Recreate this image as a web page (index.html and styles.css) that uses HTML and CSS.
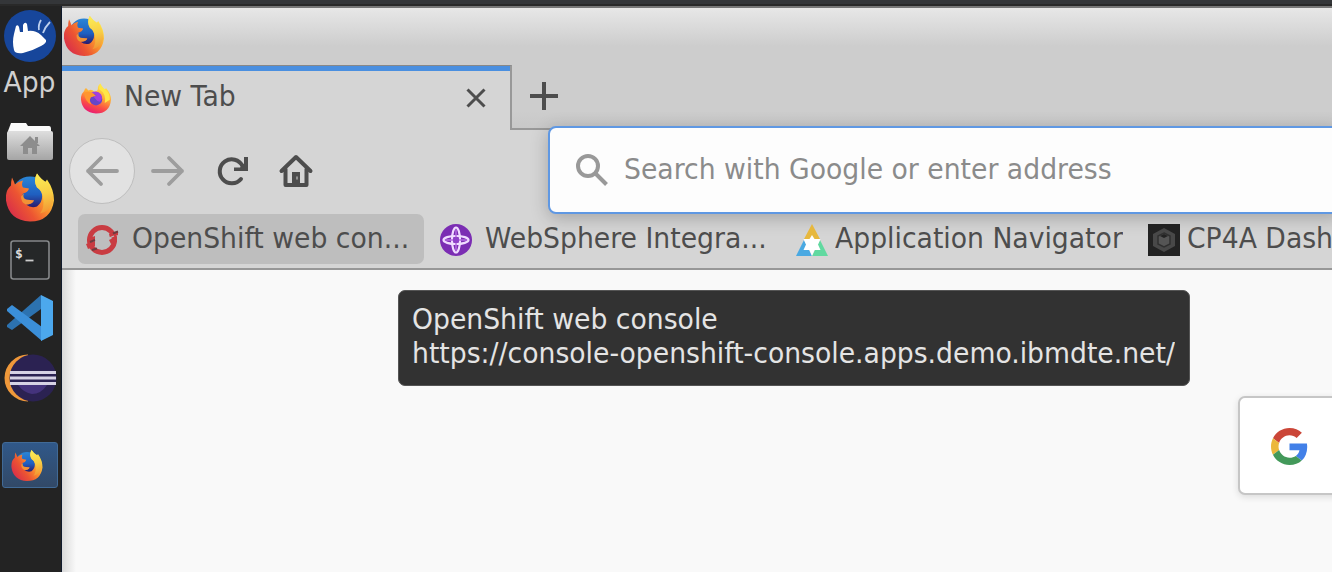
FILE: index.html
```html
<!DOCTYPE html>
<html lang="en">
<head>
<meta charset="utf-8">
<title>New Tab</title>
<link rel="stylesheet" href="styles.css">
</head>
<body>
<svg class="defs" width="0" height="0" aria-hidden="true">
  <defs>
    <linearGradient id="flame" x1=".9" y1=".1" x2=".05" y2=".7">
      <stop offset="0" stop-color="#fff04a"/><stop offset=".38" stop-color="#fb962e"/><stop offset=".7" stop-color="#ec5532"/><stop offset="1" stop-color="#dc3446"/>
    </linearGradient>
    <linearGradient id="globe" x1=".5" y1="0" x2=".5" y2="1">
      <stop offset="0" stop-color="#2a86d6"/><stop offset=".5" stop-color="#1f5fc0"/><stop offset=".85" stop-color="#2b1a6b"/>
    </linearGradient>
    <linearGradient id="tail" x1=".4" y1="0" x2=".5" y2="1">
      <stop offset="0" stop-color="#fbec55"/><stop offset=".5" stop-color="#f8cf45"/><stop offset="1" stop-color="#f29433"/>
    </linearGradient>
    <linearGradient id="newflame" x1=".8" y1="0" x2=".4" y2="1">
      <stop offset="0" stop-color="#fff250"/><stop offset=".45" stop-color="#ffa836"/><stop offset=".75" stop-color="#fb4e45"/><stop offset="1" stop-color="#ea1d72"/>
    </linearGradient>
    <linearGradient id="folder" x1="0" y1="0" x2="0" y2="1">
      <stop offset="0" stop-color="#dedede"/><stop offset="1" stop-color="#a5a5a5"/>
    </linearGradient>
    <symbol id="firefox" viewBox="0 0 48 48">
      <circle cx="24" cy="21" r="18" fill="url(#globe)"/>
      <path d="M6 4Q8 8 9 11Q12 8 17 7Q15 11 17 14L23 15Q22 19 17 20Q15 24 18 26Q23 27 28 27Q26 31 20 31Q25 35 31 33Q37 28 36 21Q35 16 31 14Q27 7 31 0Q34 5 39 9L41 6Q48 16 48 27Q45 48 24 48Q3 47 0 27Q-1 17 5 12Q5 8 6 4Z" fill="url(#flame)"/>
      <path d="M31 14Q27 7 31 0Q35 6 41 9Q48 18 47 28Q44 38 34 40Q39 34 37 24Q36 17 31 14Z" fill="url(#tail)"/>
      <path d="M18 20Q16 24 20 26L28 27Q26 31 20 31Q15 29 15 23Z" fill="#f29235"/>
    </symbol>
    <symbol id="firefox-new" viewBox="0 0 48 48">
      <path d="M8 7Q10 9 12 11Q17 8 21 13Q28 13 27 6Q28 2 31 0Q32 7 38 10L40 7Q48 16 48 26Q46 48 24 48Q2 46 0 26Q-1 18 5 12Q6 8 8 7Z" fill="url(#newflame)"/>
      <circle cx="24" cy="25" r="10" fill="#6546c9"/>
      <path d="M16 15Q26 10 32 17Q36 24 30 29Q25 28 22 23Q18 20 25 19Q22 15 16 15Z" fill="#a23ee0"/>
      <path d="M5 15Q11 11 18 15L24 19Q20 21 16 22Q12 27 17 34Q6 29 5 15Z" fill="#ff9630"/>
      <path d="M29 9Q29 4 31 0Q35 8 41 11Q47 18 46 26L38 31Q41 16 29 9Z" fill="#ffe747"/>
    </symbol>
  </defs>
</svg>

<div class="panel"></div>
<div class="desktop">
  <aside class="dock">
    <svg class="mouse" viewBox="0 0 52 52"><circle cx="26" cy="26" r="26" fill="#17469b"/><path d="M10 40Q8 32 10 24L12 16Q14 14 15 17L16 22H19V15Q21 11 23 14L24 21Q31 20 37 25L42 30Q43 33 37 36Q28 41 19 43Q11 44 10 40Z" fill="#fff"/><path d="M35 20Q34 15 37 10M39 23Q41 17 46 12" stroke="#bdd0ee" stroke-width="1.8" fill="none"/></svg>
    <span class="app">App</span>
    <svg class="folder" viewBox="0 0 46 37"><path d="M1 8L4 0H19L21 3H42Q44 3 44 6V12H1Z" fill="#fafafa"/><rect y="8" width="46" height="29" rx="2" fill="url(#folder)"/><path d="M23 13L33 23H30V31H25V25H21V31H16V23H13Z" fill="#8d8d8d"/><path d="M28 14h3v6h-3z" fill="#8d8d8d"/></svg>
    <svg class="ff-dock"><use href="#firefox"/></svg>
    <svg class="term" viewBox="0 0 40 40"><rect x="1" y="1" width="38" height="38" rx="2.5" fill="#252728" stroke="#85888a" stroke-width="1.6"/><text class="prompt" x="5" y="18">$</text><path d="M15.500 20.500h8" stroke="#ccc" stroke-width="1.800"/></svg>
    <svg class="code" viewBox="0 0 46 46"><path d="M0 30L34 0V14L5 35L0 32Z" fill="#2c72b0"/><path d="M0 14L5 10L35 32V46L0 16Z" fill="#3b8fd9"/><path d="M34 0L46 6V40L34 46Z" fill="#4ca8ed"/></svg>
    <svg class="eclipse" viewBox="0 0 52 48"><path d="M24 0.500A23.500 23.500 0 0 0 24 47.500Z" fill="#ef983a"/><ellipse cx="29" cy="24" rx="23.500" ry="23.500" fill="#2b2252"/><path d="M14 31H43Q37 40 28 40Q20 39 14 31Z" fill="#44337c"/><path d="M6 18.500H52M6 24H52M6 29.500H52" stroke="#d6d2e4" stroke-width="3"/></svg>
    <div class="running"><svg class="ff-small"><use href="#firefox"/></svg></div>
  </aside>

  <main class="window">
    <header class="titlebar"><svg class="ff-title"><use href="#firefox"/></svg></header>
    <div class="tabs">
      <div class="tab">
        <svg class="ff-tab"><use href="#firefox-new"/></svg>
        <span class="t-tab">New Tab</span>
        <svg class="close" viewBox="0 0 20 20"><path d="M1.500 1.500L18.500 18.500M18.500 1.500L1.500 18.500"/></svg>
      </div>
      <div class="strip"><svg class="plus" viewBox="0 0 28 28"><path d="M14 0V28M0 14H28"/></svg></div>
    </div>
    <nav class="toolbar">
      <div class="back"><svg class="ico" viewBox="0 0 32 32"><path d="M31 16H2M15 3L2 16L15 29"/></svg></div>
      <svg class="ico forward" viewBox="0 0 32 32"><path d="M1 16H30M17 3L30 16L17 29"/></svg>
      <svg class="ico reload" viewBox="0 0 32 32"><path d="M25 24A12 12 0 1 1 26.500 11"/><path class="solid" d="M32 2V16H18V12.500H24L28 8.500V2Z"/></svg>
      <svg class="ico home" viewBox="0 0 32 32"><path d="M1.500 16L16 2L30.500 16M5.500 14V30H26.500V14"/><path class="solid" d="M12 17H20V30H12Z"/><path class="knob" d="M17 22v2"/></svg>
      <div class="urlbar">
        <svg class="search" viewBox="0 0 32 32"><circle cx="12" cy="12" r="10"/><path d="M19 19L30.500 30.500"/></svg>
        <span class="t-search">Search with Google or enter address</span>
      </div>
    </nav>
    <div class="bookmarks">
      <div class="bm hover">
        <svg class="fav" viewBox="0 0 32 32"><circle cx="16" cy="16" r="12.500" fill="none" stroke="#c93c42" stroke-width="5"/><path d="M23 10L32 7V11L24 14ZM23 16L31 12V18L25 20ZM0 20L9 17V22L2 25ZM1 15L9 12V16L2 19Z" fill="#c93c42"/><path d="M27 9.500L32 7.500M4 18L9 16M6 26L11 24.500" stroke="#713b3e" stroke-width="2"/><path d="M22 14.500L28 12" stroke="#bebebe" stroke-width="1.200"/></svg>
        <span class="t-os">OpenShift web con...</span>
      </div>
      <div class="bm ws">
        <svg class="fav" viewBox="0 0 32 32"><circle cx="16" cy="16" r="16" fill="#7b2db3"/><g fill="none" stroke="#f0dcff" stroke-width="2.200"><ellipse cx="16" cy="16" rx="4" ry="12.500"/><ellipse cx="16" cy="16" rx="12.500" ry="4"/></g><path d="M16 5V27M5 16H27" stroke="#b46be0" stroke-width="1.500"/><circle cx="16" cy="16" r="3" fill="#8f40c9"/></svg>
        <span class="t-ws">WebSphere Integra...</span>
      </div>
      <div class="bm an">
        <svg class="fav" viewBox="0 0 32 32"><path d="M16 0L24 15H8Z" fill="#e7b83e"/><path d="M8 16L16 32H0Z" fill="#4aa9e2"/><path d="M24 16L32 32H16Z" fill="#61d9a0"/><path d="M16 11L18.500 15H24.500L22 20.500L24.500 26H18.500L16 32L13.500 26H7.500L10 20.500L7.500 15H13.500Z" fill="#fff"/></svg>
        <span class="t-an">Application Navigator</span>
      </div>
      <div class="bm cp">
        <svg class="fav" viewBox="0 0 32 32"><rect width="32" height="32" fill="#222"/><path d="M16 4L27 10V22L16 28L5 22V10Z" fill="#484848"/><path d="M16 9L22 12V20L16 23L10 20V12Z" fill="#555" stroke="#303030" stroke-width="1.500"/><path d="M12 12L16 10L20 12L16 14Z" fill="#222"/></svg>
        <span class="t-cp">CP4A Dash</span>
      </div>
    </div>
    <section class="page">
      <div class="tooltip"><span class="t-tip1">OpenShift web console</span><span class="t-tip2">https://console-openshift-console.apps.demo.ibmdte.net/</span></div>
      <div class="google">
        <svg class="g" viewBox="0 0 48 48"><path fill="#cb4638" d="M24 9.500c3.540 0 6.710 1.220 9.210 3.600l6.850-6.850C35.900 2.380 30.470 0 24 0 14.620 0 6.510 5.380 2.560 13.220l7.980 6.190C12.430 13.720 17.740 9.500 24 9.500z"/><path fill="#4280e8" d="M46.980 24.550c0-1.570-.15-3.090-.38-4.550H24v9.020h12.940c-.58 2.960-2.260 5.480-4.780 7.180l7.730 6c4.510-4.180 7.090-10.360 7.090-17.650z"/><path fill="#ecb83c" d="M10.530 28.590c-.48-1.450-.76-2.990-.76-4.590s.27-3.140.76-4.590l-7.980-6.190C.92 16.460 0 20.120 0 24s.92 7.540 2.560 10.780l7.970-6.190z"/><path fill="#43995a" d="M24 48c6.480 0 11.930-2.130 15.890-5.810l-7.730-6c-2.150 1.450-4.920 2.300-8.160 2.300-6.260 0-11.570-4.220-13.470-9.910l-7.980 6.190C6.510 42.620 14.620 48 24 48z"/></svg>
      </div>
    </section>
  </main>
</div>
</body>
</html>
```
FILE: styles.css
```css
* { box-sizing: border-box; }
body { margin: 0; width: 1332px; height: 572px; overflow: hidden; display: flex; flex-direction: column; background: #232323; font: 26.67px/34px "DejaVu Sans", sans-serif; color: #4d4d4d; }
svg { display: block; flex: none; overflow: visible; }
span { white-space: nowrap; transform: scaleY(1.05); transform-origin: 0 76%; }
.defs { position: absolute; }
.panel { flex: none; height: 6px; background: #343639; border-bottom: 2px solid #292929; }
.desktop { flex: 1; display: flex; min-height: 0; }
.dock { flex: none; width: 62px; display: flex; flex-direction: column; align-items: center; padding: 4px 2px 0 0; background: #232323; border-right: 1px solid #101a2c; }
.mouse { width: 52px; height: 52px; }
.app { margin-top: 4px; color: #d0d0d0; }
.folder { width: 46px; height: 37px; margin-top: 23px; }
.ff-dock { width: 48px; height: 49px; margin-top: 13px; }
.term { width: 40px; height: 40px; margin-top: 18px; }
.prompt { font: bold 13px "DejaVu Sans Mono", monospace; fill: #ddd; }
.code { width: 46px; height: 46px; margin-top: 15px; }
.eclipse { width: 52px; height: 48px; margin-top: 13px; }
.running { width: 56px; height: 46px; margin-top: 40px; padding: 7px 8px; background: linear-gradient(#305889, #324967); border: 1px solid #416a96; border-radius: 3px; }
.ff-small { width: 32px; height: 31px; }
.window { flex: 1; min-width: 0; display: flex; flex-direction: column; background: #d5d5d5; }
.titlebar { flex: none; height: 59px; padding: 9px 0 0 2px; border-top: 2px solid #777; background: linear-gradient(#e7e7e7, #cdcdcd 38px); }
.ff-title { width: 40px; height: 40px; margin-top: -1px; }
.tabs { flex: none; height: 65px; display: flex; }
.tab { width: 450px; display: flex; align-items: center; border-top: 1px solid #888; border-right: 2px solid #989898; padding: 0 24px 1px 19px; box-shadow: inset 0 5px #4a8fe0; }
.ff-tab { width: 30px; height: 31px; margin-top: 2px; }
.t-tab { margin: -1px 0 0 13px; flex: 1; }
.close { width: 20px; height: 20px; fill: none; stroke: #4d4d4d; stroke-width: 3; }
.strip { flex: 1; padding: 17px 0 0 18px; background: linear-gradient(#cdcdcd 45px, #c8c8c8); border-top: 1px solid #cdcdcd; border-bottom: 2px solid #989898; }
.plus { width: 28px; height: 28px; fill: none; stroke: #4d4d4d; stroke-width: 4; margin-top: -1px; }
.toolbar { flex: none; height: 83px; display: flex; align-items: center; padding-left: 7px; }
.back { width: 66px; height: 66px; display: grid; place-items: center; border: 1.5px solid #bebebe; border-radius: 50%; background: #e2e2e2; }
.toolbar > .back, .toolbar > .ico { margin-top: -2px; }
.ico { width: 32px; height: 32px; fill: none; stroke: #4d4d4d; stroke-width: 4; stroke-linecap: round; stroke-linejoin: round; }
.back .ico, .forward { stroke: #9d9d9d; stroke-width: 3.8; }
.forward { margin-left: 17px; }
.reload { margin-left: 32px; }
.home { margin-left: 32px; }
.solid { fill: #4d4d4d; stroke: none; }
.knob { stroke: #aaa; stroke-width: 1.5; }
.urlbar { position: relative; flex: 1; height: 88px; margin: -3px -10px 0 236px; display: flex; align-items: center; padding-left: 26px; background: #fdfdfd; border: 2px solid #5f98e3; border-radius: 8px; box-shadow: 0 4px 18px rgba(0,0,0,.23); }
.search { width: 32px; height: 32px; fill: none; stroke: #999; stroke-width: 4; }
.t-search { margin-left: 16px; color: #8b8b8b; }
.bookmarks { flex: none; height: 57px; display: flex; padding: 1px 0 4px 16px; border-bottom: 2px solid #979797; }
.bm { display: flex; align-items: center; flex: none; border-radius: 7px; }
.bm .fav { width: 32px; height: 32px; position: relative; z-index: 1; margin-top: 1px; }
.bm span { position: relative; z-index: 1; margin-top: -1px; }
.hover { width: 346px; background: #bebebe; padding-left: 8px; height: 50px; }
.hover span { margin-left: 14px; }
.ws { width: 340px; margin-left: 16px; }
.ws span { margin-left: 13px; }
.an { width: 336px; margin-left: 16px; }
.an span { margin-left: 7px; }
.cp { margin-left: 16px; }
.cp span { margin-left: 7px; }
.page { flex: 1; position: relative; background: linear-gradient(90deg, #d9d9d9, #f9f9f9 14px); }
.tooltip { position: absolute; left: 336px; top: 20px; width: 792px; height: 96px; padding: 12px 13px; display: flex; flex-direction: column; color: #e4e4e4; background: #323232; border: 1px solid #555; border-radius: 7px; }
.google { position: absolute; left: 1176px; top: 126px; width: 110px; height: 99px; padding: 30px 31px; background: #fff; border: 2px solid #c6c6c6; border-radius: 7px; box-shadow: 0 2px 7px rgba(0,0,0,.12); }
.g { width: 37px; height: 37px; }
```
